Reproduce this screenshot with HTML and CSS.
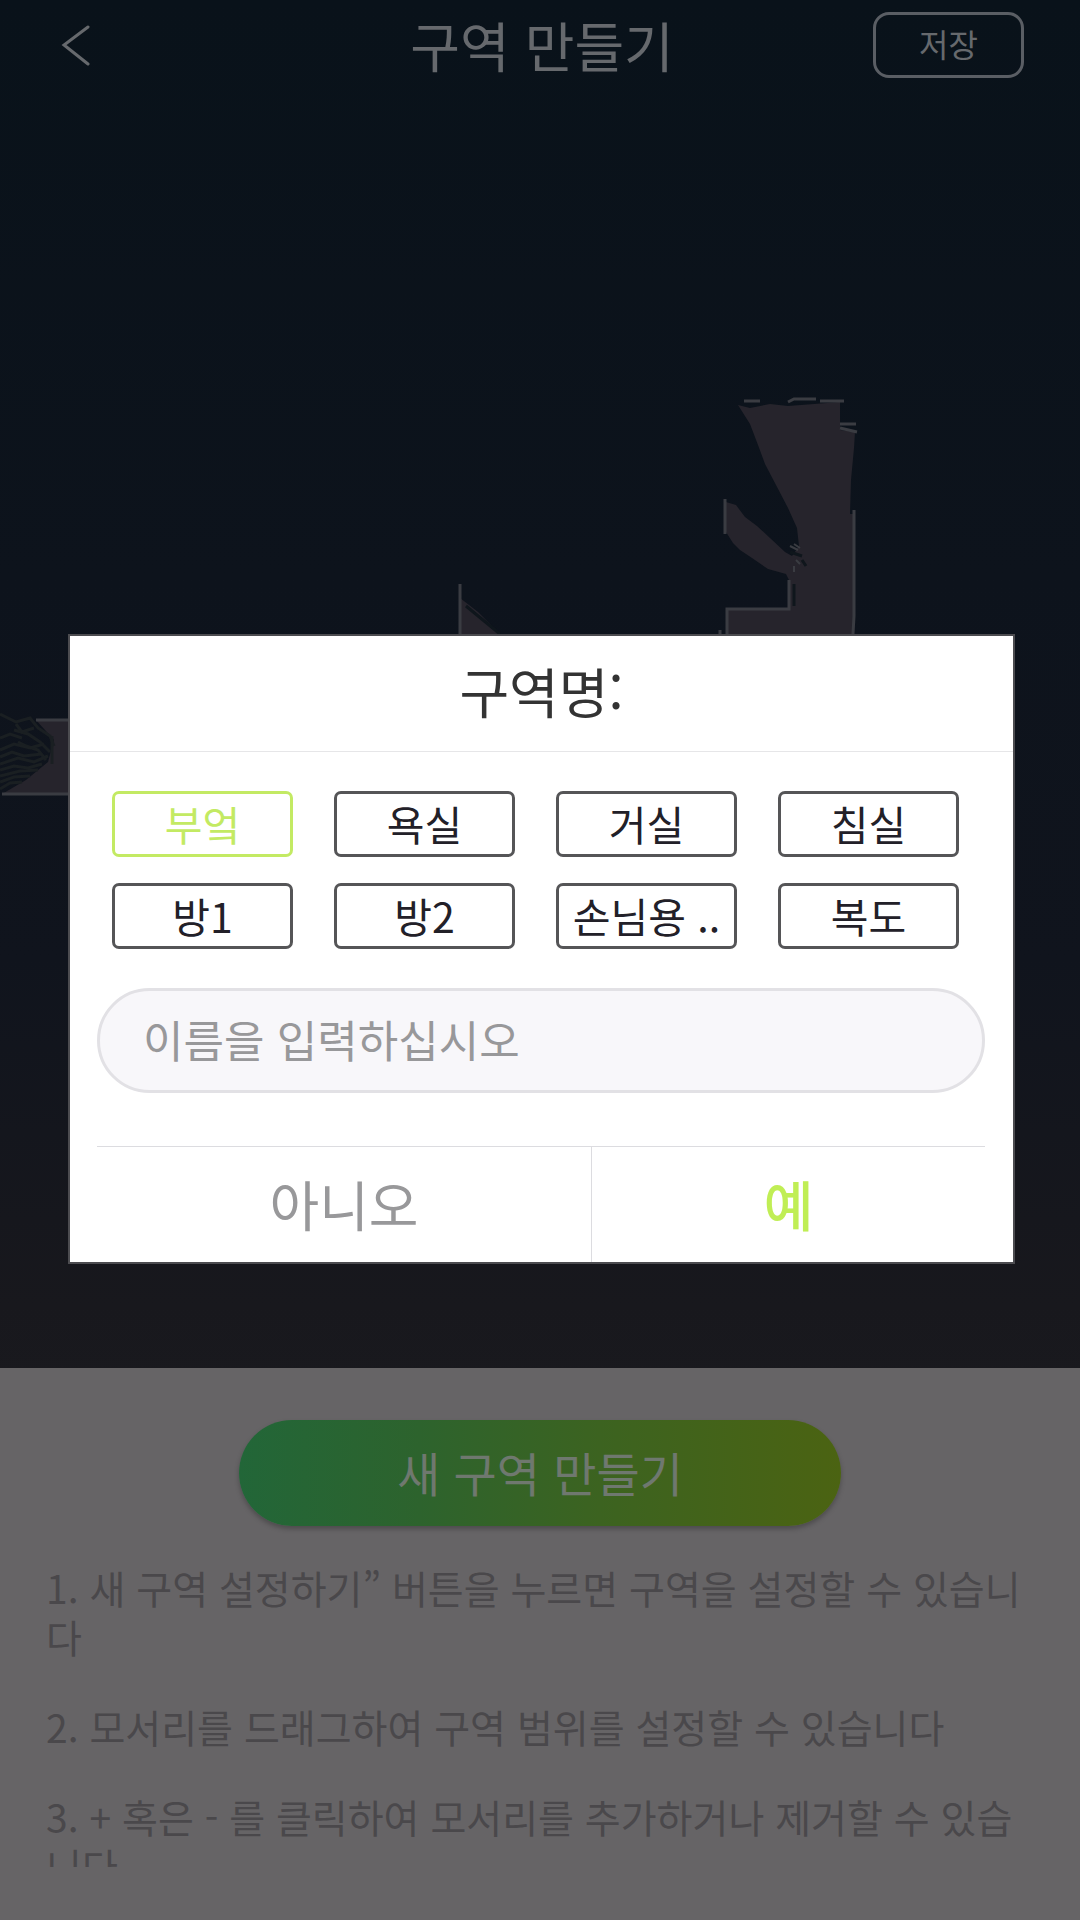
FILE: index.html
```html
<!DOCTYPE html>
<html lang="ko">
<head>
<meta charset="UTF-8">
<meta name="viewport" content="width=device-width, initial-scale=1.0">
<title>구역 만들기</title>
<link rel="stylesheet" href="styles.css">
</head>
<body>

<div class="page">
    <header class="topbar">
        <a href="#" class="back" aria-label="뒤로">
            <svg width="30" height="42" viewBox="0 0 30 42"><path d="M28 3 L4 21 L28 40"/></svg>
        </a>
        <h1>구역 만들기</h1>
        <button type="button" class="save">저장</button>
    </header>

    <div class="map">
        <svg viewBox="0 92 1080 1276" preserveAspectRatio="xMidYMin slice" aria-hidden="true">
            <!-- scanned floor -->
            <g class="floor">
                <path d="M738 405 L750 408 L770 404 L788 406 L840 402 L840 430 L855 432 L854 448 L851 480 L850 514 L854 514 L854 640 L727 640 L727 610 L790 610 L790 582 L786 574 L768 569 L752 558 L740 550 L733 543 L726 532 L726 502 L736 505 L745 517 L757 526 L770 538 L785 552 L792 556 L799 546 L797 528 L788 508 L776 485 L765 464 L758 445 L750 424 Z"/>
                <path d="M460 598 L478 612 L492 626 L505 640 L460 640 Z"/>
                <path d="M36 720 L70 720 L70 794 L2 794 L26 780 L48 762 L54 740 Z"/>
            </g>
            <!-- walls -->
            <g class="wall">
                <path d="M744 401 H760 M788 402 L794 399 H816 M820 401 H844 M840 424 H856 M840 428 L857 432 M725 499 V534 M854 510 V616 L853 634 M789 580 V609 H727 V640 M720 630 V640"/>
                <path d="M460 584 V640"/>
                <path d="M36 720 H70 M2 794 H70"/>
            </g>
            <g class="specks">
                <path d="M790 546 L798 550 M796 560 L800 564 M794 544 L800 548 M794 566 V572"/>
            </g>
            <g class="noise">
                <path d="M790 552 L802 556 M802 560 L806 566 M794 584 V606 M466 606 L500 634"/>
            </g>
            <g class="scan">
                <path d="M0 714 L16 722 L30 718 L38 728 L50 736 L54 746 M14 730 L28 734 L40 742 L50 752 M18 742 L26 746 L38 750 L46 760 M0 738 L10 734 L22 738"/>
                <path d="M0 750 L14 744 L30 748 L44 744 M0 757 L12 752 L24 756 L42 754 M0 764 L18 758 L34 762 L48 756 M0 770 L14 766 L28 768 L42 764 M0 776 L20 771 L38 770 M0 782 L14 777 L30 776 M0 789 L10 783 L22 782 M52 736 V764 M16 724 L22 732 L34 728"/>
            </g>
        </svg>
    </div>

    <section class="panel">
        <button type="button" class="create">새 구역 만들기</button>
        <div class="help">
            <p>1. 새 구역 설정하기” 버튼을 누르면 구역을 설정할 수 있습니다</p>
            <p>2. 모서리를 드래그하여 구역 범위를 설정할 수 있습니다</p>
            <p>3. + 혹은 - 를 클릭하여 모서리를 추가하거나 제거할 수 있습니다</p>
        </div>
    </section>
</div>

<div class="overlay">
    <form class="dialog" role="dialog" aria-labelledby="dialogTitle">
        <h2 id="dialogTitle"><label for="zoneName">구역명:</label></h2>
        <div class="names">
            <button type="button" class="name active">부엌</button>
            <button type="button" class="name">욕실</button>
            <button type="button" class="name">거실</button>
            <button type="button" class="name">침실</button>
            <button type="button" class="name">방1</button>
            <button type="button" class="name">방2</button>
            <button type="button" class="name">손님용 ..</button>
            <button type="button" class="name">복도</button>
        </div>
        <input type="text" id="zoneName" name="zoneName" placeholder="이름을 입력하십시오">
        <div class="actions">
            <button type="button" class="no">아니오</button>
            <button type="submit" class="yes">예</button>
        </div>
    </form>
</div>

</body>
</html>
```

FILE: styles.css
```css
* {
    box-sizing: border-box;
}
body {
    margin: 0;
    font-family: "Noto Sans CJK KR", sans-serif;
    background-color: #666466;
}
button, input {
    font-family: inherit;
    margin: 0;
    padding: 0;
}
h1, h2, p {
    margin: 0;
    font-weight: normal;
}
.page {
    display: flex;
    flex-direction: column;
    height: 100vh;
    background: linear-gradient(#09121a, #0d131c 30%, #10141d 50%, #18181d 68%, #19191e 72%);
}

/* Top bar */
.topbar {
    display: grid;
    grid-template-columns: 1fr auto 1fr;
    align-items: center;
    padding: 12px 56px 14px 60px;
    color: #66696d;
}
.topbar h1 {
    font-size: 54px;
    line-height: 64px;
}
.back {
    display: flex;
}
.back svg {
    fill: none;
    stroke: #66696d;
    stroke-width: 3;
    stroke-linecap: round;
}
.save {
    justify-self: end;
    width: 151px;
    height: 66px;
    padding-bottom: 4px;
    border: 3px solid #5a5e64;
    border-radius: 16px;
    background: none;
    color: #66696d;
    font-size: 32px;
    line-height: 40px;
}

/* Map */
.map {
    flex: 1;
    min-height: 0;
}
.map svg {
    display: block;
    width: 100%;
    height: 100%;
}
.floor {
    fill: #26242c;
}
.wall {
    fill: none;
    stroke: #3a3c42;
    stroke-width: 3;
}
.noise {
    fill: none;
    stroke: #0f161c;
    stroke-width: 3;
}
.specks {
    fill: none;
    stroke: #3a3c42;
    stroke-width: 2;
}
.scan {
    fill: none;
    stroke: #1a1f22;
    stroke-width: 3;
}

/* Bottom panel */
.panel {
    padding: 52px 46px 53px;
    background-color: #666466;
}
.create {
    display: block;
    width: 61%;
    height: 106px;
    margin: 0 auto 37px;
    padding-bottom: 4px;
    border: none;
    border-radius: 53px;
    background: linear-gradient(to right, #226638, #2d632d 30%, #3c6320 60%, #4b6312);
    box-shadow: 0 3px 5px rgba(0, 0, 0, 0.25);
    color: #6f786f;
    font-size: 47px;
}
.help {
    height: 304px;
    overflow: hidden;
    color: #4a484b;
    font-size: 39px;
    line-height: 49px;
}
.help p {
    margin-bottom: 41px;
}

/* Dialog */
.overlay {
    position: fixed;
    inset: 0;
    display: flex;
    align-items: center;
    justify-content: center;
    padding: 0 65px 22px 68px;
}
.dialog {
    width: 100%;
    border: 2px solid #4c4c50;
    background-color: #fff;
}
.dialog h2 {
    padding: 15px 0 20px;
    border-bottom: 1px solid #e6e6e8;
    color: #333;
    font-size: 54px;
    line-height: 80px;
    text-align: center;
}
.names {
    display: grid;
    grid-template-columns: repeat(4, 1fr);
    gap: 26px 41px;
    padding: 39px 54px 39px 42px;
}
.name {
    height: 66px;
    padding-bottom: 3px;
    border: 3px solid #555557;
    border-radius: 7px;
    background-color: #fff;
    color: #222028;
    font-size: 41px;
    line-height: 56px;
    white-space: nowrap;
}
.name.active {
    border-color: #c3ea63;
    color: #c3ea63;
}
.dialog input {
    display: block;
    width: calc(100% - 55px);
    height: 105px;
    margin: 0 27px;
    padding: 0 43px 3px;
    border: 3px solid #e2e1e5;
    border-radius: 53px;
    background-color: #f8f7fa;
    color: #333;
    font-size: 44px;
}
.dialog input::placeholder {
    color: #98989a;
    opacity: 1;
}
.actions {
    display: flex;
    margin: 53px 28px 0 27px;
    border-top: 1px solid #dcdce0;
}
.actions button {
    height: 115px;
    padding-bottom: 2px;
    border: none;
    background: none;
    font-size: 54px;
}
.actions .no {
    flex: 494;
    border-right: 1px solid #dcdce0;
    color: #98989a;
}
.actions .yes {
    flex: 393;
    color: #c0ee55;
    font-weight: 500;
}
```
